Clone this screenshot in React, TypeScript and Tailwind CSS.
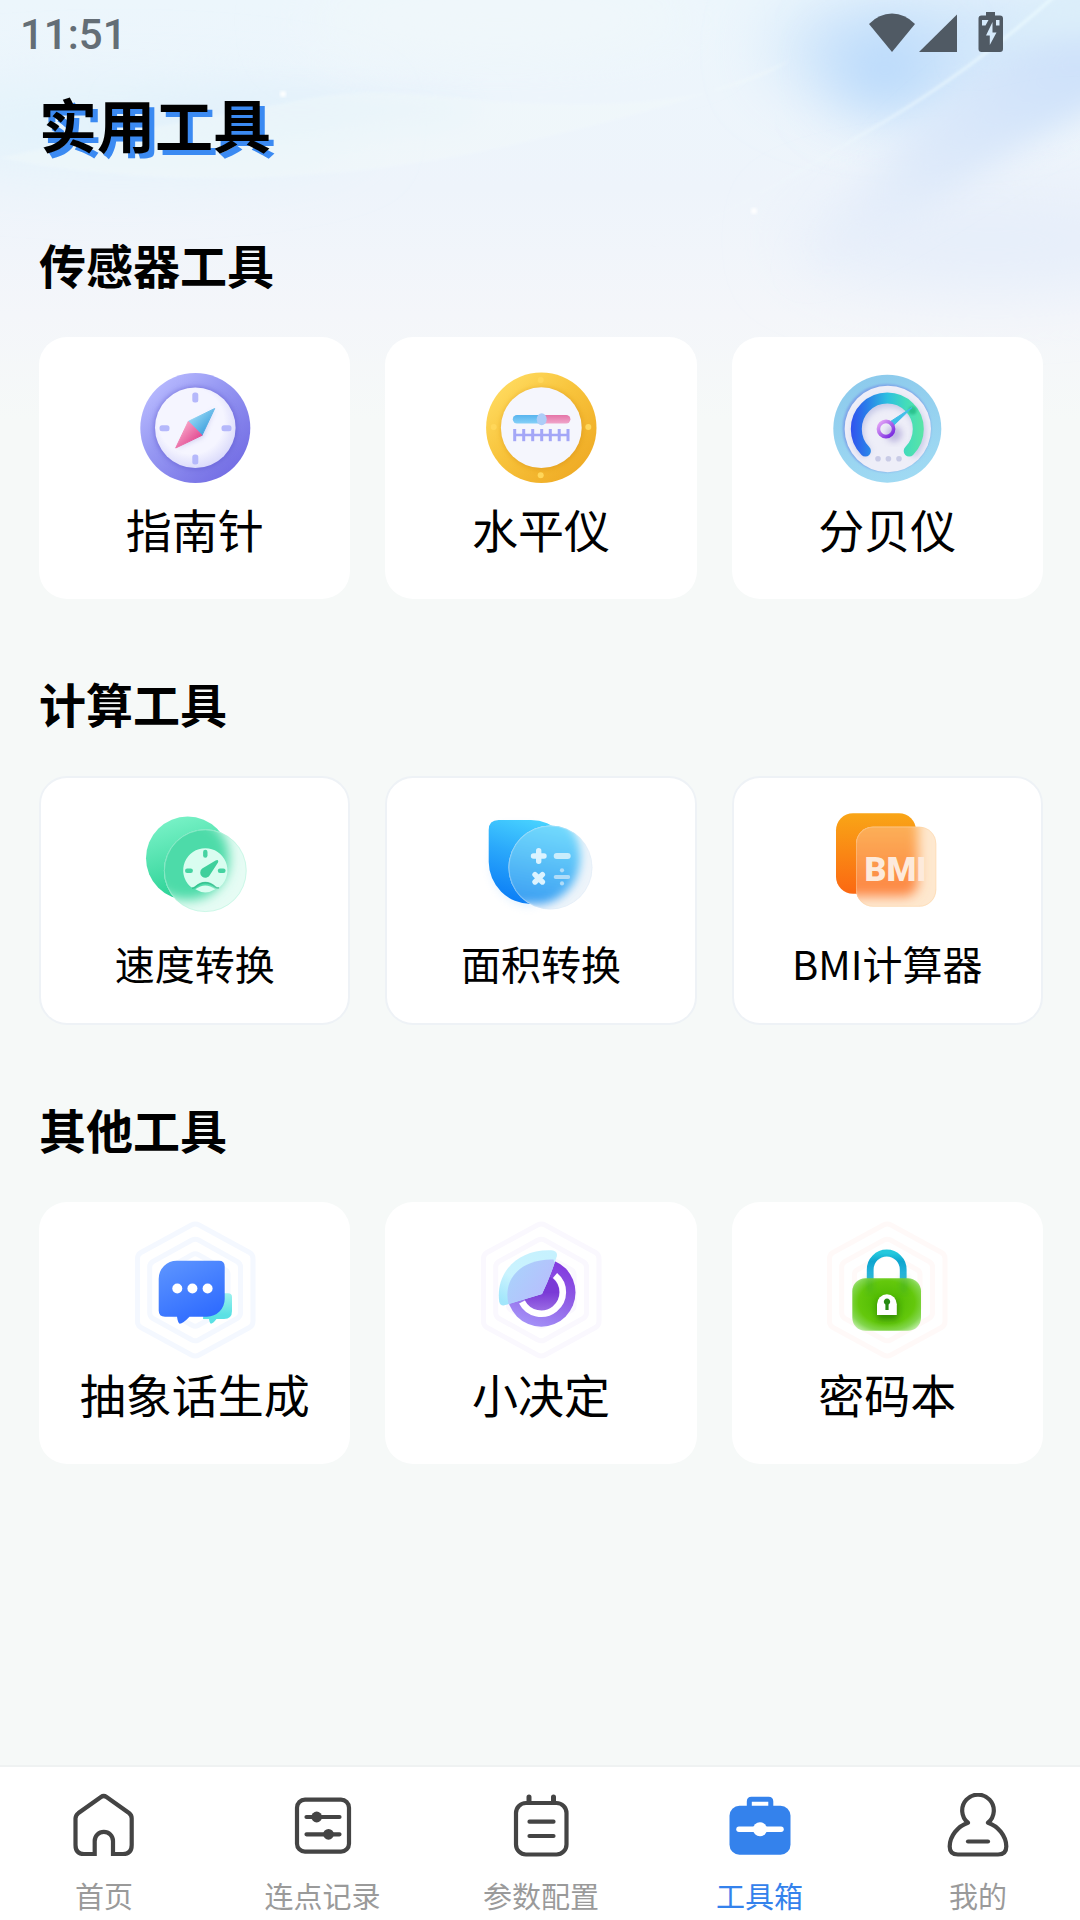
import React from "react";

type Tool = { name: string; icon: React.ReactNode };
type Section = { title: string; outlined?: boolean; tools: Tool[] };

function Art({ children }: { children: React.ReactNode }) {
  return (
    <svg viewBox="0 0 140 140" className="size-[140px] shrink-0" fill="none" aria-hidden="true">
      {children}
    </svg>
  );
}

function CompassIcon() {
  return (
    <Art>
      <defs>
        <linearGradient id="cp-ring" x1="0.1" y1="0.1" x2="0.85" y2="0.9">
          <stop offset="0" stopColor="#b9bbff" />
          <stop offset="0.4" stopColor="#9799f3" />
          <stop offset="1" stopColor="#736de4" />
        </linearGradient>
        <radialGradient id="cp-face" cx="0.45" cy="0.42" r="0.58">
          <stop offset="0.7" stopColor="#f5f5ff" />
          <stop offset="1" stopColor="#dcdcfb" />
        </radialGradient>
        <linearGradient id="cp-blue" x1="0" y1="0" x2="1" y2="1">
          <stop offset="0.2" stopColor="#97d8f5" />
          <stop offset="0.8" stopColor="#3d9fdd" />
        </linearGradient>
        <linearGradient id="cp-pink" x1="0" y1="0" x2="1" y2="1">
          <stop offset="0.2" stopColor="#f8a3c6" />
          <stop offset="0.8" stopColor="#e0468f" />
        </linearGradient>
        <filter id="cp-blur" x="-20%" y="-20%" width="140%" height="140%">
          <feGaussianBlur stdDeviation="2.5" />
        </filter>
      </defs>
      <circle cx="70.3" cy="73" r="55" fill="url(#cp-ring)" />
      <circle cx="70.3" cy="73" r="41.5" fill="#5f59cc" opacity="0.55" filter="url(#cp-blur)" />
      <circle cx="70.3" cy="72.7" r="40.3" fill="url(#cp-face)" />
      <g fill="#b5b8fb">
        <rect x="67.3" y="37.5" width="6" height="10" rx="2.5" />
        <rect x="67.3" y="99.5" width="6" height="10" rx="2.5" />
        <rect x="34.5" y="70.3" width="10" height="6" rx="2.5" />
        <rect x="96.5" y="70.3" width="10" height="6" rx="2.5" />
      </g>
      <path d="M89.7 53.5 L78 82 L51 94 Z" fill="#8d8ad8" opacity="0.35" filter="url(#cp-blur)" />
      <path d="M89.7 53.5 L63.3 66.4 L77 80.3 Z" fill="url(#cp-blue)" stroke="url(#cp-blue)" strokeLinejoin="round" />
      <path d="M50.7 93 L63.3 66.4 L77 80.3 Z" fill="url(#cp-pink)" stroke="url(#cp-pink)" strokeLinejoin="round" />
    </Art>
  );
}

function LevelIcon() {
  const ticks = [43.7, 52.7, 61.7, 70.7, 79.3, 88.2, 97];
  return (
    <Art>
      <defs>
        <linearGradient id="lv-ring" x1="0.1" y1="0.1" x2="0.85" y2="0.9">
          <stop offset="0" stopColor="#ffdb60" />
          <stop offset="0.45" stopColor="#f8c43c" />
          <stop offset="1" stopColor="#efab25" />
        </linearGradient>
        <linearGradient id="lv-blue" x1="0" y1="0" x2="0" y2="1">
          <stop offset="0" stopColor="#58b4ee" />
          <stop offset="1" stopColor="#84d0f8" />
        </linearGradient>
        <linearGradient id="lv-pink" x1="0" y1="0" x2="0" y2="1">
          <stop offset="0" stopColor="#e475a8" />
          <stop offset="1" stopColor="#f0a5ca" />
        </linearGradient>
        <filter id="lv-blur" x="-20%" y="-20%" width="140%" height="140%">
          <feGaussianBlur stdDeviation="2.5" />
        </filter>
      </defs>
      <circle cx="70.3" cy="72.7" r="55.2" fill="url(#lv-ring)" />
      <circle cx="70.8" cy="73.4" r="41" fill="#d48d12" opacity="0.5" filter="url(#lv-blur)" />
      <circle cx="70.3" cy="72.7" r="40.4" fill="#f5f6fd" />
      <g fill="#ffd75a">
        <circle cx="69.7" cy="25" r="3" />
        <circle cx="117.3" cy="72" r="3" />
        <circle cx="69.7" cy="120.3" r="3" />
        <circle cx="22.7" cy="72" r="3" />
      </g>
      <path d="M71 60 H46 A4.2 4.2 0 0 0 46 68.4 H71 Z" fill="url(#lv-blue)" />
      <path d="M71 60 H95.2 A4.2 4.2 0 0 1 95.2 68.4 H71 Z" fill="url(#lv-pink)" />
      <ellipse cx="70.7" cy="64.2" rx="5" ry="6" fill="#adcdf8" />
      <path d="M43 80 H98" stroke="#a4a7f7" strokeWidth="2.4" />
      {ticks.map((x) => (
        <path key={x} d={`M${x} 74 V86.2`} stroke="#a4a7f7" strokeWidth="3" />
      ))}
    </Art>
  );
}

function DecibelIcon() {
  return (
    <Art>
      <defs>
        <linearGradient id="db-ring" x1="0.3" y1="0" x2="0.6" y2="1">
          <stop offset="0" stopColor="#8ccaec" />
          <stop offset="1" stopColor="#a0daf3" />
        </linearGradient>
        <linearGradient id="db-arc" x1="34" y1="80" x2="107" y2="80" gradientUnits="userSpaceOnUse">
          <stop offset="0" stopColor="#3152ee" />
          <stop offset="0.2" stopColor="#2a7aea" />
          <stop offset="0.5" stopColor="#2dc0e0" />
          <stop offset="0.75" stopColor="#43dcba" />
          <stop offset="1" stopColor="#5ae5a6" />
        </linearGradient>
        <linearGradient id="db-hub" x1="0.1" y1="0.1" x2="0.9" y2="0.9">
          <stop offset="0" stopColor="#dd9df5" />
          <stop offset="1" stopColor="#7b2ce0" />
        </linearGradient>
        <filter id="db-blur" x="-30%" y="-30%" width="160%" height="160%">
          <feGaussianBlur stdDeviation="3" />
        </filter>
        <filter id="db-edge" x="-10%" y="-10%" width="120%" height="120%">
          <feGaussianBlur stdDeviation="1" />
        </filter>
      </defs>
      <circle cx="70.3" cy="73.7" r="54" fill="url(#db-ring)" />
      <circle cx="69.8" cy="73.2" r="44" fill="#7da2e8" filter="url(#db-edge)" />
      <circle cx="70.8" cy="74" r="43.2" fill="#eeeef8" />
      <path d="M50 99 A31 31 0 1 1 94 99" stroke="#9aa0d6" strokeWidth="11" opacity="0.5" filter="url(#db-blur)" />
      <path d="M48.4 96 A31 31 0 1 1 92.2 96" stroke="url(#db-arc)" strokeWidth="11" strokeLinecap="round" />
      <circle cx="77" cy="79" r="8" fill="#8f83c8" opacity="0.5" filter="url(#db-blur)" />
      <circle cx="95.5" cy="55.5" r="4" fill="#17b178" opacity="0.6" filter="url(#db-edge)" />
      <path d="M72 67.5 L95 52.5 L75 72 Z" fill="#41bfe9" stroke="#41bfe9" strokeLinejoin="round" />
      <circle cx="69" cy="74" r="7.6" stroke="url(#db-hub)" strokeWidth="3.6" />
      <g fill="#c9cbe6">
        <circle cx="61" cy="103.7" r="2.8" />
        <circle cx="71.4" cy="103.7" r="2.8" />
        <circle cx="82" cy="103.7" r="2.8" />
      </g>
    </Art>
  );
}

function SpeedIcon() {
  return (
    <Art>
      <defs>
        <linearGradient id="sp-back" x1="0.3" y1="0" x2="0.6" y2="1">
          <stop offset="0" stopColor="#79f2c7" />
          <stop offset="0.5" stopColor="#4fe0ac" />
          <stop offset="1" stopColor="#22cf90" />
        </linearGradient>
        <clipPath id="sp-clip">
          <circle cx="80.3" cy="76.7" r="41.4" />
        </clipPath>
        <filter id="sp-blur" x="-30%" y="-30%" width="160%" height="160%">
          <feGaussianBlur stdDeviation="6" />
        </filter>
      </defs>
      <circle cx="62.7" cy="64.3" r="41.7" fill="url(#sp-back)" />
      <circle cx="80.3" cy="76.7" r="41.4" fill="#e6fcf4" />
      <g clipPath="url(#sp-clip)">
        <rect x="20" y="22" width="84" height="84" rx="40" fill="#4ddba9" filter="url(#sp-blur)" />
      </g>
      <circle cx="80.3" cy="76.7" r="40.9" stroke="#b4f4dc" strokeOpacity="0.5" />
      <path
        d="M80.3 54.3 A22 22 0 0 1 95.6 92.2 Q93 94.5 90.8 92.6 Q80.3 83.6 69.8 92.6 Q67.6 94.5 65 92.2 A22 22 0 0 1 80.3 54.3 Z"
        fill="#d9fdf0"
      />
      <path d="M67 94.2 Q69 94 70.5 92.8 Q80.3 84.4 90.1 92.8 Q92 94.2 94 93.8" stroke="#1faf7c" strokeOpacity="0.55" strokeWidth="1.6" />
      <path d="M70.3 95.3 Q80.3 87.5 90.3 95.3 Q80.3 101.5 70.3 95.3 Z" fill="#d9fdf0" />
      <g stroke="#45d3a1" strokeWidth="4.4" strokeLinecap="round">
        <path d="M80.3 58 V61.5" />
        <path d="M62.2 76.7 H65.7" />
        <path d="M95 76.7 H98.4" />
      </g>
      <path d="M92.9 66.3 Q93.6 67 93 68.4 L85.2 80.6 A5.2 5.2 0 1 1 77.2 74.5 L90.6 66.6 Q92.2 65.8 92.9 66.3 Z" fill="#3fd09c" />
    </Art>
  );
}

function AreaIcon() {
  return (
    <Art>
      <defs>
        <linearGradient id="ar-back" x1="0.65" y1="0" x2="0.35" y2="1">
          <stop offset="0" stopColor="#49d4ff" />
          <stop offset="0.45" stopColor="#2ba9fb" />
          <stop offset="1" stopColor="#0b7df6" />
        </linearGradient>
        <linearGradient id="ar-glass" x1="0.6" y1="0" x2="0.4" y2="1">
          <stop offset="0" stopColor="#7ae3ff" />
          <stop offset="0.5" stopColor="#5cc2f8" />
          <stop offset="1" stopColor="#3a9df2" />
        </linearGradient>
        <clipPath id="ar-clip">
          <circle cx="79.5" cy="73.5" r="42" />
        </clipPath>
        <filter id="ar-blur" x="-30%" y="-30%" width="160%" height="160%">
          <feGaussianBlur stdDeviation="5" />
        </filter>
      </defs>
      <path d="M27.7 32 H60 A42 42 0 0 1 60 112 A42 42 0 0 1 20 72 Z" fill="#8cc8ff" opacity="0.3" filter="url(#ar-blur)" />
      <path d="M27.7 26 H60 A42 42 0 0 1 60 110 A42.3 42.3 0 0 1 17.7 68 V36 Q17.7 26 27.7 26 Z" fill="url(#ar-back)" />
      <circle cx="79.5" cy="73.5" r="42" fill="#eef4fa" />
      <g clipPath="url(#ar-clip)">
        <path d="M15 15 H66 A42 46 0 0 1 66 110 H15 Z" fill="url(#ar-glass)" filter="url(#ar-blur)" />
      </g>
      <circle cx="79.5" cy="73.5" r="41.5" stroke="#d9e8f5" strokeOpacity="0.35" />
      <g stroke="#dcf3ff" strokeWidth="5.4" strokeLinecap="round">
        <path d="M62.5 62 H73 M67.7 56.7 V67.3" />
        <path d="M64 80.6 L71.4 88 M71.4 80.6 L64 88" />
      </g>
      <rect x="82.7" y="59" width="17" height="6" rx="3" fill="#c9edfc" />
      <rect x="82.7" y="81" width="16.5" height="4" rx="2" fill="#b0dcf8" />
      <circle cx="91" cy="76.3" r="2.1" fill="#b0dcf8" />
      <circle cx="91" cy="89.4" r="2.1" fill="#b0dcf8" />
    </Art>
  );
}

function BmiIcon() {
  return (
    <Art>
      <defs>
        <linearGradient id="bm-back" x1="0" y1="0" x2="0" y2="1">
          <stop offset="0" stopColor="#f9a516" />
          <stop offset="1" stopColor="#fb6812" />
        </linearGradient>
        <linearGradient id="bm-glass" x1="0" y1="0" x2="0" y2="1">
          <stop offset="0" stopColor="#fcb95c" />
          <stop offset="1" stopColor="#fd8442" />
        </linearGradient>
        <clipPath id="bm-clip">
          <rect x="39" y="32.7" width="80.3" height="80" rx="17" />
        </clipPath>
        <filter id="bm-blur" x="-30%" y="-30%" width="160%" height="160%">
          <feGaussianBlur stdDeviation="6" />
        </filter>
      </defs>
      <rect x="19" y="19.3" width="80" height="80.5" rx="17" fill="url(#bm-back)" />
      <rect x="39" y="32.7" width="80.3" height="80" rx="17" fill="#fee8cf" />
      <g clipPath="url(#bm-clip)">
        <rect x="10" y="16" width="91" height="86" rx="14" fill="url(#bm-glass)" filter="url(#bm-blur)" />
      </g>
      <rect x="39.5" y="33.2" width="79.3" height="79" rx="16.5" stroke="#fdd3a0" strokeOpacity="0.4" />
      <text x="78.5" y="86.500" textAnchor="middle" fontSize="34" fontWeight="900" fill="#fdeadb" fontFamily="Roboto, sans-serif">
        BMI
      </text>
    </Art>
  );
}

function Hexagons({ color }: { color: string }) {
  return (
    <g stroke={color} strokeWidth="5" strokeLinejoin="round">
      <path d="M66.5 5 Q70.3 3 74 5 L124.5 32.5 Q128 34.5 128 38.5 V101.5 Q128 105.5 124.5 107.5 L74 135 Q70.3 137 66.5 135 L16 107.5 Q12.5 105.5 12.5 101.5 V38.5 Q12.5 34.5 16 32.5 Z" />
      <path d="M67 20 Q70.3 18.3 73.5 20 L112 41.5 Q115.5 43.5 115.5 47 V93 Q115.5 96.5 112 98.5 L73.5 120 Q70.3 121.7 67 120 L28 98.5 Q24.7 96.5 24.7 93 V47 Q24.7 43.5 28 41.5 Z" />
      <path d="M67.5 34.5 Q70.3 33 73 34.5 L100.5 50 Q103 51.5 103 54 V86 Q103 88.5 100.5 90 L73 105.5 Q70.3 107 67.5 105.5 L40 90 Q37.5 88.5 37.5 86 V54 Q37.5 51.5 40 50 Z" />
    </g>
  );
}

function ChatIcon() {
  return (
    <Art>
      <defs>
        <linearGradient id="ch-main" x1="0.2" y1="0" x2="0.7" y2="1">
          <stop offset="0" stopColor="#5b93ff" />
          <stop offset="1" stopColor="#2c69ff" />
        </linearGradient>
        <linearGradient id="ch-teal" x1="0" y1="0" x2="0" y2="1">
          <stop offset="0" stopColor="#9df1ee" />
          <stop offset="0.7" stopColor="#5be1e4" />
        </linearGradient>
      </defs>
      <Hexagons color="#f4f8ff" />
      <path d="M80 73.3 H103 Q107 73.3 107 77 V91 Q107 99 99 99 H91.5 Q88 103.5 86 103.7 Q84.5 103 84 99 H78 Z" fill="url(#ch-teal)" />
      <path
        d="M51.7 40.7 H94 Q99.7 40.7 99.7 46.5 V79 A17.7 17.7 0 0 1 82 96.7 H64.5 Q58 103.5 54.7 103.8 Q53 103 52 96.7 H40 Q33.7 96.7 33.7 90.5 V58.7 A18 18 0 0 1 51.7 40.7 Z"
        fill="url(#ch-main)"
      />
      <g fill="#ffffff">
        <circle cx="52.3" cy="68.5" r="5" />
        <circle cx="67.4" cy="68.5" r="5" />
        <circle cx="82.6" cy="68.5" r="5" />
      </g>
    </Art>
  );
}

function DecisionIcon() {
  return (
    <Art>
      <defs>
        <linearGradient id="dc-disc" x1="0.7" y1="0" x2="0.3" y2="1">
          <stop offset="0" stopColor="#8136de" />
          <stop offset="0.5" stopColor="#9060e6" />
          <stop offset="1" stopColor="#a594f8" />
        </linearGradient>
        <linearGradient id="dc-core" x1="0.5" y1="0" x2="0.5" y2="1">
          <stop offset="0.5" stopColor="#7a3ad6" />
          <stop offset="1" stopColor="#9a6be4" />
        </linearGradient>
        <linearGradient id="dc-fan" x1="0" y1="0.2" x2="1" y2="0.8">
          <stop offset="0" stopColor="#a9d3fb" />
          <stop offset="1" stopColor="#b9bbfd" />
        </linearGradient>
        <linearGradient id="dc-edge" x1="0.8" y1="0" x2="0.2" y2="1">
          <stop offset="0" stopColor="#c6f1fe" />
          <stop offset="0.6" stopColor="#caf3fe" />
          <stop offset="1" stopColor="#a2e6fb" />
        </linearGradient>
      </defs>
      <Hexagons color="#faf8fe" />
      <circle cx="70.3" cy="72.5" r="34.2" fill="url(#dc-disc)" />
      <circle cx="70.3" cy="72.5" r="18" fill="url(#dc-core)" />
      <path d="M51 82 A21.6 21.6 0 1 0 84 55.5" stroke="#ffffff" strokeWidth="6.6" />
      <path d="M71 74 L33.5 85.3 Q29 86 28.2 81.5 C24.5 54 45 29 80.5 30.3 Q87 31 85.8 36.3 Q80 55 71 74 Z" fill="url(#dc-edge)" />
      <path d="M71 74 L37.5 84 C31.5 60 49 38.5 82.5 39.5 L83.5 43 Q78 60 71 74 Z" fill="url(#dc-fan)" />
    </Art>
  );
}

function LockIcon() {
  return (
    <Art>
      <defs>
        <linearGradient id="lk-loop" x1="0" y1="0" x2="0" y2="1">
          <stop offset="0" stopColor="#25c9dd" />
          <stop offset="0.25" stopColor="#0ea5cf" />
          <stop offset="1" stopColor="#3fc0e6" />
        </linearGradient>
        <radialGradient id="lk-body" cx="0.5" cy="0.46" r="0.68">
          <stop offset="0" stopColor="#4ab600" />
          <stop offset="0.6" stopColor="#64c80c" />
          <stop offset="0.8" stopColor="#82d64c" />
          <stop offset="1" stopColor="#cdf3bb" />
        </radialGradient>
        <filter id="lk-blur" x="-50%" y="-50%" width="200%" height="200%">
          <feGaussianBlur stdDeviation="3" />
        </filter>
      </defs>
      <Hexagons color="#fff9f8" />
      <path d="M53.2 66 V49.5 A16.5 16.5 0 0 1 86.2 49.5 V66" stroke="url(#lk-loop)" strokeWidth="6.8" />
      <rect x="35.3" y="58.3" width="68.7" height="52.4" rx="13" fill="url(#lk-body)" />
      <path d="M53.5 59 V71 H52 V59 Z M86 59 V71 H88 V59 Z" fill="#1f9440" stroke="#1f9440" strokeWidth="3" opacity="0.4" filter="url(#lk-blur)" />
      <rect x="60" y="80" width="21" height="20" rx="3" fill="#1d6d00" opacity="0.6" filter="url(#lk-blur)" />
      <path d="M60 84.2 A9.9 9.9 0 0 1 79.8 84.2 V95 H60 Z" fill="#ffffff" />
      <path d="M68.4 84.5 A3.2 3.2 0 1 1 71.6 84.5 V90 H68.4 Z" fill="#268a12" />
    </Art>
  );
}

const sections: Section[] = [
  {
    title: "传感器工具",
    tools: [
      { name: "指南针", icon: <CompassIcon /> },
      { name: "水平仪", icon: <LevelIcon /> },
      { name: "分贝仪", icon: <DecibelIcon /> },
    ],
  },
  {
    title: "计算工具",
    outlined: true,
    tools: [
      { name: "速度转换", icon: <SpeedIcon /> },
      { name: "面积转换", icon: <AreaIcon /> },
      { name: "BMI计算器", icon: <BmiIcon /> },
    ],
  },
  {
    title: "其他工具",
    tools: [
      { name: "抽象话生成", icon: <ChatIcon /> },
      { name: "小决定", icon: <DecisionIcon /> },
      { name: "密码本", icon: <LockIcon /> },
    ],
  },
];

function ToolCard({ tool, outlined }: { tool: Tool; outlined?: boolean }) {
  return outlined ? (
    <button type="button" className="flex flex-col items-center rounded-[28px] border-2 border-[#eef2f6] bg-white pt-4 pb-9 text-black">
      {tool.icon}
      <span className="mt-[5px] text-[40px] leading-[48px] whitespace-nowrap">{tool.name}</span>
    </button>
  ) : (
    <button type="button" className="flex flex-col items-center rounded-[28px] bg-white pt-[18px] pb-[47px] text-black">
      {tool.icon}
      <span className="mt-[9px] text-[46px] leading-[48px] whitespace-nowrap">{tool.name}</span>
    </button>
  );
}

function Backdrop() {
  return (
    <svg viewBox="0 0 1080 420" preserveAspectRatio="none" className="pointer-events-none absolute inset-x-0 top-0 h-[420px] w-full" fill="none" aria-hidden="true">
      <defs>
        <linearGradient id="bg-base" x1="0" y1="0" x2="0" y2="1">
          <stop offset="0" stopColor="#ecf6fc" />
          <stop offset="0.45" stopColor="#eef4fb" />
          <stop offset="0.75" stopColor="#f4f6fa" />
          <stop offset="1" stopColor="#f6f9f8" />
        </linearGradient>
        <linearGradient id="bg-streak" x1="1060" y1="0" x2="660" y2="260" gradientUnits="userSpaceOnUse">
          <stop offset="0" stopColor="#eafaff" stopOpacity="0.9" />
          <stop offset="0.6" stopColor="#eef7fc" stopOpacity="0.5" />
          <stop offset="1" stopColor="#f4f6fa" stopOpacity="0" />
        </linearGradient>
        <linearGradient id="bg-band" x1="1060" y1="60" x2="800" y2="290" gradientUnits="userSpaceOnUse">
          <stop offset="0" stopColor="#cfe2fa" />
          <stop offset="0.5" stopColor="#dbe8fa" stopOpacity="0.8" />
          <stop offset="1" stopColor="#eaf0fa" stopOpacity="0" />
        </linearGradient>
        <filter id="bg-soft" x="-60%" y="-100%" width="220%" height="300%">
          <feGaussianBlur stdDeviation="32" />
        </filter>
        <filter id="bg-mid" x="-30%" y="-60%" width="160%" height="220%">
          <feGaussianBlur stdDeviation="16" />
        </filter>
        <filter id="bg-line" x="-10%" y="-10%" width="120%" height="120%">
          <feGaussianBlur stdDeviation="1.5" />
        </filter>
      </defs>
      <rect width="1080" height="420" fill="url(#bg-base)" />
      <ellipse cx="120" cy="125" rx="240" ry="40" fill="#e2f3fb" filter="url(#bg-soft)" />
      <ellipse cx="300" cy="110" rx="180" ry="20" fill="#e3f1fb" filter="url(#bg-mid)" />
      <ellipse cx="500" cy="20" rx="200" ry="30" fill="#f1f8fa" filter="url(#bg-soft)" />
      <ellipse cx="940" cy="50" rx="170" ry="60" fill="#d0e6fb" filter="url(#bg-soft)" />
      <ellipse cx="885" cy="70" rx="50" ry="36" fill="#b2d6fb" filter="url(#bg-soft)" />
      <ellipse cx="990" cy="240" rx="200" ry="50" fill="#e6eefa" filter="url(#bg-soft)" />
      <path d="M1140 -40 C1000 60 880 130 780 290 C880 250 980 160 1140 80 Z" fill="url(#bg-band)" filter="url(#bg-mid)" />
      <path d="M1060 -20 L1120 -20 L1120 40 Q1030 30 960 60 Z" fill="#dbeefa" filter="url(#bg-mid)" />
      <path d="M0 158 C160 190 340 182 500 148 C620 120 700 100 790 60 C740 98 620 112 480 100 C400 90 350 90 300 100 C200 120 100 135 0 158 Z" fill="#f2f9fa" fillOpacity="0.4" filter="url(#bg-line)" />
      <path d="M1056 -5 C1000 45 940 90 870 130 C800 170 740 210 640 250" stroke="url(#bg-streak)" strokeWidth="3" filter="url(#bg-line)" />
      <circle cx="283" cy="94" r="3" fill="#ffffff" filter="url(#bg-line)" />
      <circle cx="754" cy="211" r="3" fill="#ffffff" filter="url(#bg-line)" />
    </svg>
  );
}

function StatusBar() {
  return (
    <header className="flex h-[68px] items-center justify-between pt-0.5 pr-[75px] pl-5 text-[#505a64]">
      <time className="font-[Roboto] text-[42px] leading-[48px] font-medium text-[#646e76]">11:51</time>
      <svg viewBox="0 0 136 42" className="mb-1 h-[42px] w-[136px]" fill="currentColor" aria-label="Wi-Fi, 信号, 充电中" role="img">
        <path d="M0 12 Q10 1.5 23 1.5 Q36 1.5 46 12 L23 40 Z" />
        <path d="M88 2.5 V40 H50 Z" />
        <path
          fillRule="evenodd"
          d="M117 0 H126 V3.5 H131 Q134 3.5 134 6.5 V37 Q134 40 131 40 H112.5 Q109.5 40 109.5 37 V6.5 Q109.5 3.5 112.5 3.5 H117 Z M113 8 V13.5 H116.5 L119.5 8 Z M127 8 V13.5 H130.5 V8 Z M123.500 10 L117 23.5 H120.8 V33 L127.5 20.500 H123.500 Z"
        />
      </svg>
    </header>
  );
}

function NavArt({ children }: { children: React.ReactNode }) {
  return (
    <svg viewBox="0 0 64 64" className="size-16" fill="none" stroke="currentColor" strokeWidth="4.2" strokeLinecap="round" strokeLinejoin="round" aria-hidden="true">
      {children}
    </svg>
  );
}

const navItems = [
  {
    label: "首页",
    icon: (
      <NavArt>
        <path
          strokeLinejoin="miter"
          strokeLinecap="butt"
          d="M22.7 63 V48 A9.1 9.1 0 0 1 41 48 V61 H51 Q59.7 61 59.7 52 V25.5 Q59.7 22 57 20 L34.5 4 Q31.7 2 29 4 L6.5 20 Q3.5 22.5 3.5 25.5 V52 Q3.5 61 12 61 H22.7"
        />
      </NavArt>
    ),
  },
  {
    label: "连点记录",
    icon: (
      <NavArt>
        <rect x="6" y="6.7" width="52" height="52" rx="8" />
        <path d="M15.5 24 H48.5 M15.5 41.3 H48.5" />
        <circle cx="25.7" cy="24" r="5.4" fill="currentColor" stroke="none" />
        <circle cx="37.5" cy="41.3" r="5.4" fill="currentColor" stroke="none" />
      </NavArt>
    ),
  },
  {
    label: "参数配置",
    icon: (
      <NavArt>
        <rect x="7" y="10" width="50.5" height="51.5" rx="10" />
        <path d="M20 4 V9 M44.5 4 V9" strokeWidth="5" />
        <path d="M20.5 28.7 H44.5 M20.5 43 H44.5" />
      </NavArt>
    ),
  },
  {
    label: "工具箱",
    active: true,
    icon: (
      <NavArt>
        <rect x="1.5" y="12.7" width="61" height="49" rx="10" fill="currentColor" stroke="none" />
        <path d="M21.3 14 V8.5 Q21.3 6.2 23.500 6.2 H40.5 Q42.8 6.2 42.8 8.5 V14" strokeWidth="5" />
        <path d="M11 36.3 H53" stroke="#ffffff" strokeWidth="5.5" />
        <circle cx="32" cy="36.3" r="7" fill="#ffffff" stroke="none" />
      </NavArt>
    ),
  },
  {
    label: "我的",
    icon: (
      <NavArt>
        <path d="M22 29.7 A15.8 15.8 0 1 1 42 29.7 C52 33 60.3 43 60.3 53.5 Q60.3 61.5 52 61.5 H12 Q3.7 61.5 3.7 53.5 C3.7 43 12 33 22 29.7 Z" />
        <path d="M22 48.5 H42" />
      </NavArt>
    ),
  },
];

function BottomNav() {
  return (
    <nav className="relative mt-auto flex justify-between border-t-2 border-[#eff2f2] bg-white pt-[26px] pr-11 pb-[9px] pl-[46px]">
      {navItems.map((item) => (
        <a
          key={item.label}
          href="#"
          aria-current={item.active ? "page" : undefined}
          className={
            item.active
              ? "flex w-[116px] flex-col items-center text-[#3482ec]"
              : "flex w-[116px] flex-col items-center text-[#444444]"
          }
        >
          {item.icon}
          <span
            className={
              item.active
                ? "mt-[22px] text-[29px] leading-8 whitespace-nowrap"
                : "mt-[22px] text-[29px] leading-8 whitespace-nowrap text-[#9a9a9a]"
            }
          >
            {item.label}
          </span>
        </a>
      ))}
    </nav>
  );
}

export default function App() {
  return (
    <div lang="zh-CN" className="relative flex min-h-screen flex-col bg-[#f6f9f8] font-['Noto_Sans_CJK_SC',sans-serif] text-black">
      <Backdrop />
      <div className="relative">
        <StatusBar />
        <main className="pt-[25px] pr-[37px] pb-20 pl-[39px]">
          <h1 className="text-[58px] leading-[60px] font-bold [text-shadow:5px_5px_0_#3b8af2]">实用工具</h1>
          <div className="mt-[87px] flex flex-col gap-20">
            {sections.map((section) => (
              <section key={section.title}>
                <h2 className="text-[47px] leading-[48px] font-bold">{section.title}</h2>
                <div className="mt-[49px] grid grid-cols-3 gap-[35px]">
                  {section.tools.map((tool) => (
                    <ToolCard key={tool.name} tool={tool} outlined={section.outlined} />
                  ))}
                </div>
              </section>
            ))}
          </div>
        </main>
      </div>
      <BottomNav />
    </div>
  );
}
